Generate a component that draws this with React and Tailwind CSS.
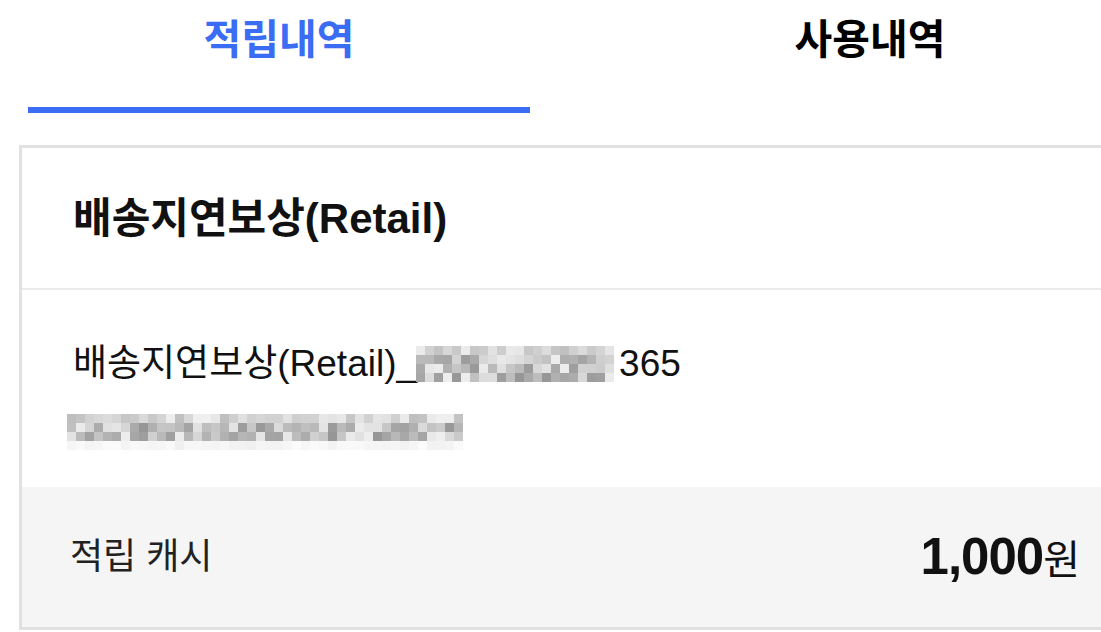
import { useState } from "react";

const font = { fontFamily: "'Liberation Sans','Noto Sans CJK KR',sans-serif" };

// 모자이크 셀 색상 (고정 시드)
function makeCells(rows, cols, seed, light) {
  let s = seed;
  const rand = () => {
    s = (s * 9301 + 49297) % 233280;
    return s / 233280;
  };
  const out = [];
  for (let r = 0; r < rows; r++) {
    const row = [];
    for (let c = 0; c < cols; c++) {
      let v = 150 + Math.floor(rand() * 90);
      if (r === 0) v = 190 + Math.floor(rand() * 50);
      if (light && r === rows - 1) v = 240 + Math.floor(rand() * 12);
      row.push(v);
    }
    out.push(row);
  }
  return out;
}

const Mosaic = ({ rows, cols, seed, cell = 9, light }) => {
  const cells = makeCells(rows, cols, seed, light);
  return (
    <div className="flex flex-col">
      {cells.map((row, i) => (
        <div key={i} className="flex">
          {row.map((v, j) => (
            <div
              key={j}
              style={{ width: cell, height: cell, background: `rgb(${v},${v},${v})` }}
            />
          ))}
        </div>
      ))}
    </div>
  );
};

const Tab = ({ label, active, onClick, className }) => (
  <div
    onClick={onClick}
    className={`shrink-0 w-[502px] h-[113px] flex flex-col cursor-pointer ${className}`}
  >
    <span
      className={`flex-1 flex items-start justify-center pt-[10px] text-[41px] font-bold ${
        active ? "text-[#3a6cf4]" : "text-black"
      }`}
    >
      {label}
    </span>
    <span className={`h-[6px] w-full ${active ? "bg-[#3a6cf4]" : ""}`} />
  </div>
);

export default function App() {
  const [tab, setTab] = useState(0);

  return (
    <div className="w-full h-[632px] overflow-hidden bg-white" style={font}>
      {/* 탭 */}
      <div className="flex">
        <Tab label="적립내역" active={tab === 0} onClick={() => setTab(0)} className="ml-[28px]" />
        <Tab label="사용내역" active={tab === 1} onClick={() => setTab(1)} className="ml-[89px]" />
      </div>

      {/* 카드 */}
      <div className="mt-[32px] ml-[19px] w-[1112px] border-[3px] border-[#e1e1e1] bg-white">
        <div className="h-[142px] flex items-center px-[51px] border-b-2 border-[#ebebeb]">
          <h2 className="text-[42px] font-bold text-[#111]">배송지연보상(Retail)</h2>
        </div>

        <div className="h-[197px] px-[51px] pt-[55px]">
          <div className="flex items-center text-[37px] text-[#111] leading-none">
            <span>배송지연보상(Retail)_</span>
            <div className="-ml-[1px]">
              <Mosaic rows={4} cols={22} seed={17} />
            </div>
            <span className="ml-[5px]">365</span>
          </div>
          <div className="mt-[32px] -ml-[6px]">
            <Mosaic rows={4} cols={44} seed={53} light />
          </div>
        </div>

        <div className="h-[140px] bg-[#f5f5f5] flex items-center justify-between px-[48px]">
          <span className="text-[36px] text-[#222]">적립 캐시</span>
          <span className="flex items-baseline text-[#111]">
            <span className="text-[51px] font-bold tracking-[-1px]">1,000</span>
            <span className="text-[40px]">원</span>
          </span>
        </div>
      </div>
    </div>
  );
}
